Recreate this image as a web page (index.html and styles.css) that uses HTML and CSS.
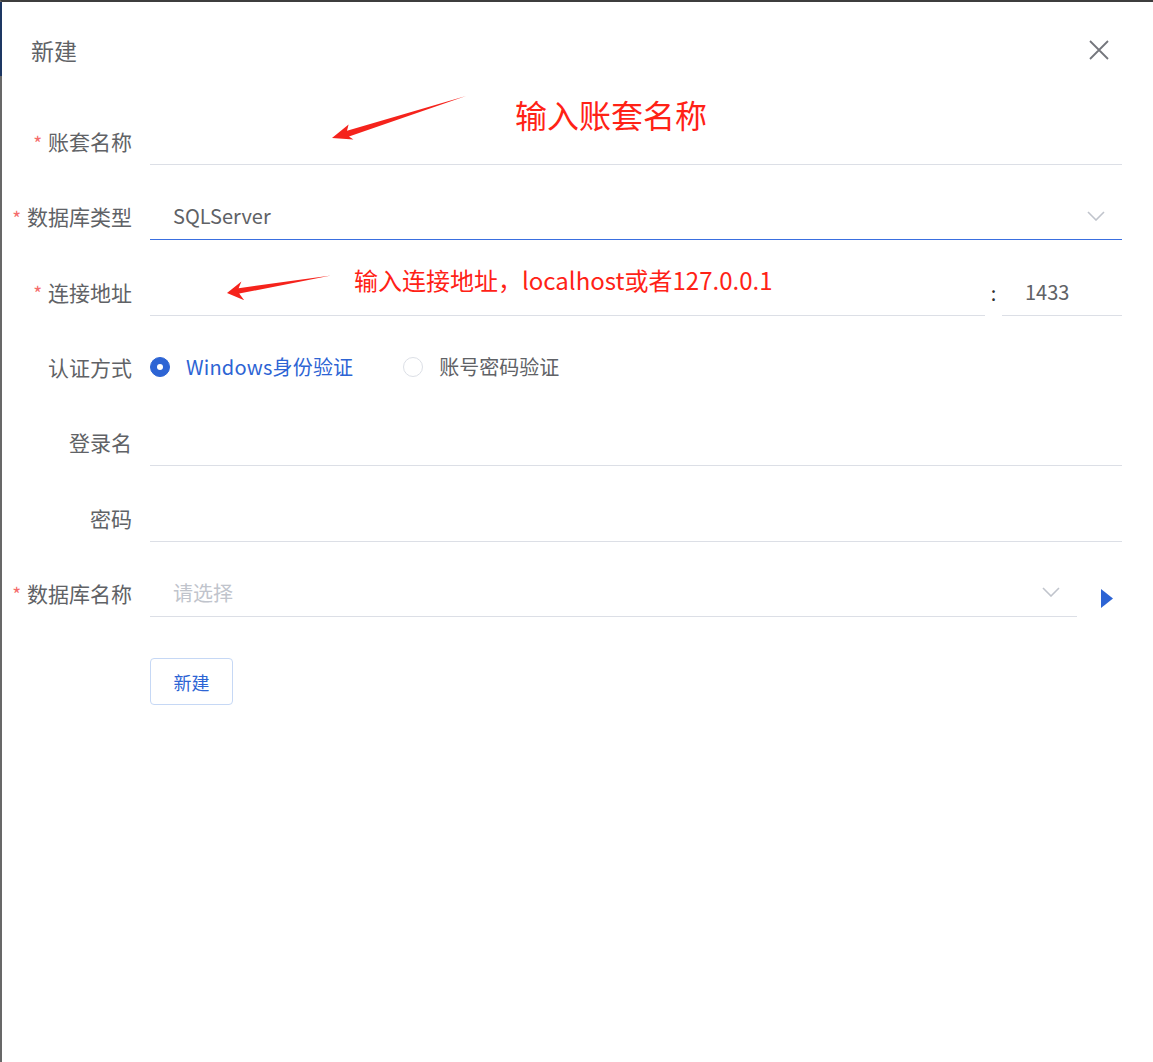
FILE: index.html
```html
<!DOCTYPE html>
<html>
<head>
    <meta charset="utf-8">
    <title>新建账套</title>
    <link rel="stylesheet" href="styles.css">
</head>
<body>
    <div class="dialog">
        <span class="edge-top"></span>

        <div class="dialog-header">
            <span class="dialog-title">新建</span>
            <button class="dialog-close" type="button">
                <svg width="20" height="20" viewBox="0 0 20 20"><path d="M1 1L19 19M19 1L1 19" stroke="#74767c" stroke-width="1.8" fill="none"/></svg>
            </button>
        </div>

        <div class="form">
            <div class="form-item">
                <label class="form-label required">账套名称</label>
                <div class="form-content">
                    <div class="input"></div>
                </div>
            </div>

            <div class="form-item">
                <label class="form-label required">数据库类型</label>
                <div class="form-content">
                    <div class="input select is-focus">
                        <span>SQLServer</span>
                        <svg class="arrow-down" width="18" height="10" viewBox="0 0 18 10"><path d="M1 1L9 9L17 1" stroke="#c0c4cc" stroke-width="1.6" fill="none"/></svg>
                    </div>
                </div>
            </div>

            <div class="form-item">
                <label class="form-label required">连接地址</label>
                <div class="form-content">
                    <div class="input"></div>
                    <span class="colon">:</span>
                    <div class="input port">1433</div>
                </div>
            </div>

            <div class="form-item">
                <label class="form-label">认证方式</label>
                <div class="form-content">
                    <div class="radio is-checked"><span class="radio-dot"></span>Windows身份验证</div>
                    <div class="radio"><span class="radio-dot"></span>账号密码验证</div>
                </div>
            </div>

            <div class="form-item">
                <label class="form-label">登录名</label>
                <div class="form-content">
                    <div class="input"></div>
                </div>
            </div>

            <div class="form-item">
                <label class="form-label">密码</label>
                <div class="form-content">
                    <div class="input"></div>
                </div>
            </div>

            <div class="form-item">
                <label class="form-label required">数据库名称</label>
                <div class="form-content">
                    <div class="input select">
                        <span class="placeholder">请选择</span>
                        <svg class="arrow-down" width="18" height="10" viewBox="0 0 18 10"><path d="M1 1L9 9L17 1" stroke="#c0c4cc" stroke-width="1.6" fill="none"/></svg>
                    </div>
                    <span class="refresh">
                        <svg width="12" height="19" viewBox="0 0 12 19"><path d="M0 0L12 9.5L0 19Z" fill="#2d64d4"/></svg>
                    </span>
                </div>
            </div>

            <div class="form-actions">
                <button class="btn" type="button">新建</button>
            </div>
        </div>

        <!-- 标注 -->
        <div class="note note-name">输入账套名称</div>
        <div class="note note-host">输入连接地址，localhost或者127.0.0.1</div>
        <svg class="note-arrows" width="1153" height="400" viewBox="0 0 1153 400">
            <polygon points="332,138 348.6,124.4 347,130.8 466,96 349,136.5 353.4,139.6" fill="#f5231c"/>
            <polygon points="227,293 241.4,281.4 238.6,288.2 331,275.5 239.2,293.6 244.2,300.2" fill="#f5231c"/>
        </svg>
    </div>
</body>
</html>
```

FILE: styles.css
```css
body {
    margin: 0;
    background: #fff;
    font-family: "Noto Sans CJK SC", "Noto Sans", sans-serif;
}
.dialog {
    position: relative;
    min-height: 100vh;
    box-sizing: border-box;
    border-top: 2px solid #3d3d3d;
    border-left: 2px solid #686868;
    background: #fff;
}
.edge-top {
    position: absolute;
    left: -2px;
    top: 0;
    width: 2px;
    height: 74px;
    background: #1d3763;
}
.dialog-header {
    display: flex;
    justify-content: space-between;
    align-items: center;
    padding: 33px 44px 0 29px;
    height: 30px;
}
.dialog-title {
    font-size: 23px;
    line-height: 30px;
    color: #606266;
}
.dialog-close {
    border: none;
    background: none;
    padding: 0;
    width: 20px;
    height: 20px;
    cursor: pointer;
}
.form {
    padding: 52px 31px 0 0;
}
.form-item {
    display: flex;
    height: 48px;
    margin-bottom: 27.33px;
}
.form-label {
    width: 130px;
    flex: none;
    display: flex;
    align-items: center;
    justify-content: flex-end;
    font-size: 21px;
    color: #606266;
    margin-right: 18px;
}
.form-label.required::before {
    content: "*";
    color: #f56c6c;
    font-size: 19px;
    margin-right: 6px;
    position: relative;
    top: 1px;
}
.form-content {
    flex: 1;
    display: flex;
    align-items: center;
    height: 48px;
}
.input {
    flex: 1;
    height: 48px;
    box-sizing: border-box;
    border-bottom: 1px solid #dcdfe6;
    display: flex;
    align-items: center;
    padding: 0 23px;
    font-size: 20px;
    color: #606266;
}
.input.is-focus {
    border-bottom-color: #3a6fe0;
}
.select {
    justify-content: space-between;
    padding-right: 17px;
}
.placeholder {
    color: #c0c4cc;
}
.arrow-down {
    display: block;
}
.colon {
    width: 17px;
    text-align: center;
    font-size: 20px;
    color: #303133;
    padding-top: 2px;
}
.input.port {
    flex: none;
    width: 120px;
}
.refresh {
    width: 45px;
    flex: none;
    display: flex;
    justify-content: center;
    padding-left: 14px;
    box-sizing: border-box;
    padding-top: 12px;
}
.radio {
    display: flex;
    align-items: center;
    font-size: 20px;
    color: #606266;
    margin-right: 50px;
}
.radio-dot {
    width: 20px;
    height: 20px;
    box-sizing: border-box;
    border: 1px solid #dcdfe6;
    border-radius: 50%;
    margin-right: 16px;
    position: relative;
}
.radio.is-checked {
    color: #2d64d4;
    letter-spacing: 0.2px;
}
.radio.is-checked .radio-dot {
    background: #2d64d4;
    border-color: #2d64d4;
}
.radio.is-checked .radio-dot::after {
    content: "";
    position: absolute;
    left: 6px;
    top: 6px;
    width: 6px;
    height: 6px;
    border-radius: 50%;
    background: #fff;
}
.form-actions {
    padding: 14px 0 0 148px;
}
.btn {
    width: 83px;
    height: 47px;
    border: 1px solid #c6d8f5;
    border-radius: 4px;
    background: #fff;
    color: #2d64d4;
    font-family: inherit;
    font-size: 18px;
    cursor: pointer;
}
.note {
    position: absolute;
    color: #ff2216;
    white-space: nowrap;
}
.note-name {
    left: 513px;
    top: 92px;
    font-size: 32px;
    line-height: 40px;
}
.note-host {
    left: 352px;
    top: 262px;
    font-size: 24px;
    line-height: 32px;
}
.note-arrows {
    position: absolute;
    left: -2px;
    top: -2px;
    pointer-events: none;
}
```
